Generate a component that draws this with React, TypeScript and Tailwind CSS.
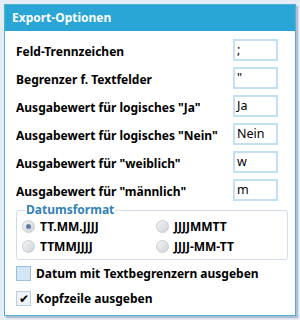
import React from "react";

const font = { fontFamily: '"Noto Sans", "Open Sans", sans-serif' };

function Row({ label, value }: { label: string; value: string }) {
  return (
    <div className="flex h-[28px] items-center">
      <div className="w-[217px] pt-[3px] text-[12px] font-bold text-black leading-none">{label}</div>
      <div className="flex h-[22px] w-[45px] items-center border-2 border-[#c3e0f5] bg-white px-[2px] text-[12.5px] text-black leading-none">
        {value}
      </div>
    </div>
  );
}

function Radio({ checked, label }: { checked?: boolean; label: string }) {
  return (
    <div className="flex items-center gap-[5px]">
      <div className="flex h-[13px] w-[13px] items-center justify-center rounded-full border border-[#c9cdd3] bg-gradient-to-br from-[#f3f4f6] to-[#cfd3d8]">
        {checked && <div className="h-[5px] w-[5px] rounded-full bg-[#5d7fa3]" />}
      </div>
      <span className="text-[12px] font-bold text-black leading-none">{label}</span>
    </div>
  );
}

export default function App() {
  const rows = [
    ["Feld-Trennzeichen", ";"],
    ["Begrenzer f. Textfelder", '"'],
    ['Ausgabewert für logisches "Ja"', "Ja"],
    ['Ausgabewert für logisches "Nein"', "Nein"],
    ['Ausgabewert für "weiblich"', "w"],
    ['Ausgabewert für "männlich"', "m"],
  ];
  return (
    <div className="h-[320px] w-[300px] bg-[#e4ecf6] pl-[4px] pt-[4px]" style={font}>
      <div className="h-[312px] w-[292px] border border-[#4fb0d8] bg-white shadow-[2px_2px_1px_rgba(120,130,160,0.45)]">
        <div className="flex h-[26px] items-center bg-[#29a6d5] px-[7px] text-[12px] font-bold text-white">
          Export-Optionen
        </div>
        <div className="pl-[11px] pt-[5px]">
          {rows.map(([l, v]) => (
            <Row key={l} label={l} value={v} />
          ))}
          <fieldset className="mt-[0px] w-[272px] rounded-[3px] border border-[#d4dde7] px-[5px] pb-[6px] pt-[1px]">
            <legend className="ml-[3px] px-[1px] text-[12px] font-bold leading-none text-[#3281b8]">Datumsformat</legend>
            <div className="grid grid-cols-[134px_1fr] gap-y-[7px] pt-[3px]">
              <Radio checked label="TT.MM.JJJJ" />
              <Radio label="JJJJMMTT" />
              <Radio label="TTMMJJJJ" />
              <Radio label="JJJJ-MM-TT" />
            </div>
          </fieldset>
          <div className="mt-[6px] flex items-center gap-[5px]">
            <div className="h-[15px] w-[15px] border border-[#9dbdd9] bg-[#d3e6f6]" />
            <span className="text-[12px] font-bold leading-none text-black">Datum mit Textbegrenzern ausgeben</span>
          </div>
          <div className="mt-[10px] flex items-center gap-[5px]">
            <div className="flex h-[15px] w-[15px] items-center justify-center border border-[#b9cde0] bg-[#eef3f8] text-[12px] leading-none text-black">
              ✔
            </div>
            <span className="text-[12px] font-bold leading-none text-black">Kopfzeile ausgeben</span>
          </div>
        </div>
      </div>
    </div>
  );
}
